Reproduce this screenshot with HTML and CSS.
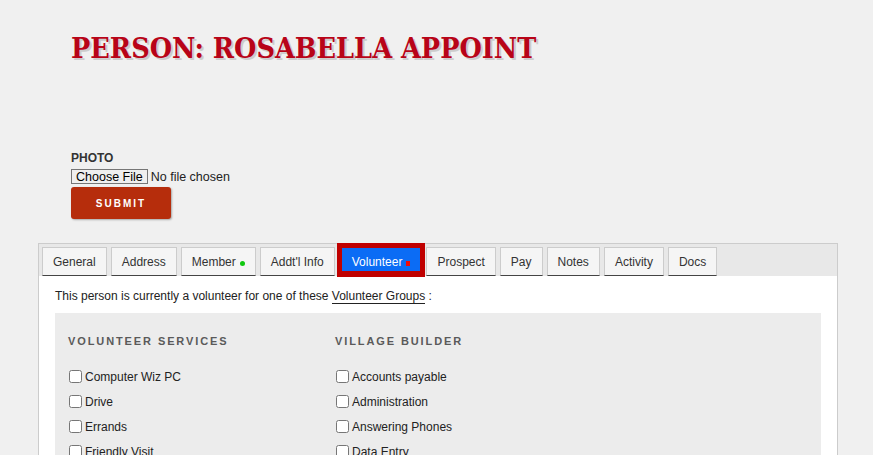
FILE: index.html
```html
<!DOCTYPE html>
<html lang="en">
<head>
  <meta charset="UTF-8" />
  <meta name="viewport" content="width=device-width, initial-scale=1.0"/>
  <title>Person: Rosabella Appoint</title>
  <link rel="stylesheet" href="styles.css">
</head>
<body>
  <div class="heading">
    <h1>PERSON: ROSABELLA APPOINT</h1>
  </div>

  <form class="photo-form">
    <label for="photoInput" class="photo-label">PHOTO</label>
    <input type="file" id="photoInput">
    <button type="button" class="btn-submit">SUBMIT</button>
  </form>

  <div class="tabs">
    <ul class="tab-bar">
      <li class="tab">General</li>
      <li class="tab">Address</li>
      <li class="tab">Member <span class="dot dot-green"></span></li>
      <li class="tab">Addt'l Info</li>
      <li class="tab active">Volunteer <span class="dot dot-red"></span></li>
      <li class="tab">Prospect</li>
      <li class="tab">Pay</li>
      <li class="tab">Notes</li>
      <li class="tab">Activity</li>
      <li class="tab">Docs</li>
    </ul>

    <div class="tab-content">
      <p class="intro">This person is currently a volunteer for one of these <a href="#groups">Volunteer Groups</a> :</p>

      <div class="groups" id="groups">
        <div class="group">
          <h4>VOLUNTEER SERVICES</h4>
          <label><input type="checkbox"> Computer Wiz PC</label>
          <label><input type="checkbox"> Drive</label>
          <label><input type="checkbox"> Errands</label>
          <label><input type="checkbox"> Friendly Visit</label>
        </div>
        <div class="group">
          <h4>VILLAGE BUILDER</h4>
          <label><input type="checkbox">Accounts payable</label>
          <label><input type="checkbox">Administration</label>
          <label><input type="checkbox">Answering Phones</label>
          <label><input type="checkbox">Data Entry</label>
        </div>
      </div>
    </div>
  </div>
</body>
</html>
```

FILE: styles.css
```css
*,
*::before,
*::after {
  margin: 0;
  padding: 0;
  box-sizing: border-box;
}

body {
  background-color: rgb(240, 240, 240);
  font-family: "Liberation Sans", Arial, Helvetica, sans-serif;
  font-size: 12px;
  color: rgb(34, 34, 34);
  overflow: hidden;
}

.heading {
  padding: 30px 71px 0;
  height: 150px;
}

.heading h1 {
  font-family: "DejaVu Serif Condensed", "DejaVu Serif", serif;
  font-weight: bold;
  font-size: 28.5px;
  line-height: 36px;
  color: rgb(184, 4, 24);
  text-shadow: 2px 2px 0 rgb(204, 204, 204);
}

.photo-form {
  display: flex;
  flex-direction: column;
  align-items: flex-start;
  padding-left: 71px;
}

.photo-label {
  font-weight: bold;
  font-size: 12px;
  color: rgb(51, 51, 51);
  line-height: 15px;
  margin-top: 1px;
}

.photo-form input[type="file"] {
  font-family: "Liberation Sans", Arial, sans-serif;
  font-size: 12.5px;
  margin-top: 3px;
}

.photo-form input[type="file"]::file-selector-button {
  font-family: "Liberation Sans", Arial, sans-serif;
  font-size: 12.5px;
  padding: 0 4px;
  height: 15px;
  margin-right: 3px;
  background-color: rgb(239, 239, 239);
  border: 1px solid rgb(118, 118, 118);
  border-radius: 0;
  color: black;
}

.btn-submit {
  width: 100px;
  height: 32px;
  margin-top: 3px;
  background-color: rgb(182, 45, 12);
  color: white;
  font-family: "Liberation Sans", Arial, sans-serif;
  font-size: 10px;
  font-weight: bold;
  letter-spacing: 2px;
  border: none;
  border-radius: 3px;
  box-shadow: 1px 1px 2px rgba(0, 0, 0, 0.3);
}

.tabs {
  width: 800px;
  margin: 24px 0 0 38px;
  border: 1px solid rgb(204, 204, 204);
  border-bottom: none;
  background-color: white;
}

.tab-bar {
  list-style: none;
  display: flex;
  align-items: flex-end;
  gap: 4px;
  height: 32px;
  padding: 0 3px;
  background-color: rgb(232, 232, 232);
}

.tab {
  display: flex;
  align-items: center;
  gap: 4px;
  height: 29px;
  padding: 1px 10px 0;
  background-color: rgb(245, 245, 245);
  border: 1px solid rgb(204, 204, 204);
  border-bottom: 1px solid rgb(68, 68, 68);
  color: rgb(51, 51, 51);
  white-space: nowrap;
}

.tab.active {
  height: 34px;
  margin: 0 -3px -1px -2px;
  padding: 4px 10px 0;
  background-color: rgb(11, 108, 245);
  border: 5px solid rgb(192, 0, 0);
  border-bottom-width: 6px;
  color: white;
}

.dot {
  display: inline-block;
  width: 5px;
  height: 5px;
  margin-top: 3px;
}

.dot-green {
  border-radius: 50%;
  background-color: rgb(16, 200, 16);
}

.dot-red {
  width: 4px;
  background-color: rgb(240, 10, 10);
}

.tab-content {
  padding: 13px 16px 0;
}

.intro {
  line-height: 14px;
}

.intro a {
  color: rgb(34, 34, 34);
  text-decoration: none;
  border-bottom: 1px solid rgb(34, 34, 34);
}

.groups {
  display: grid;
  grid-template-columns: 267px 267px;
  margin-top: 10px;
  padding: 21px 13px 0;
  height: 200px;
  background-color: rgb(236, 236, 236);
}

.group {
  display: flex;
  flex-direction: column;
}

.group h4 {
  font-size: 11px;
  font-weight: bold;
  letter-spacing: 1.9px;
  color: rgb(90, 90, 90);
  line-height: 14px;
  margin-bottom: 16px;
}

.group label {
  display: flex;
  align-items: center;
  height: 25px;
}

.group input[type="checkbox"] {
  width: 13px;
  height: 13px;
  margin: 0 3px 0 1px;
}
```
